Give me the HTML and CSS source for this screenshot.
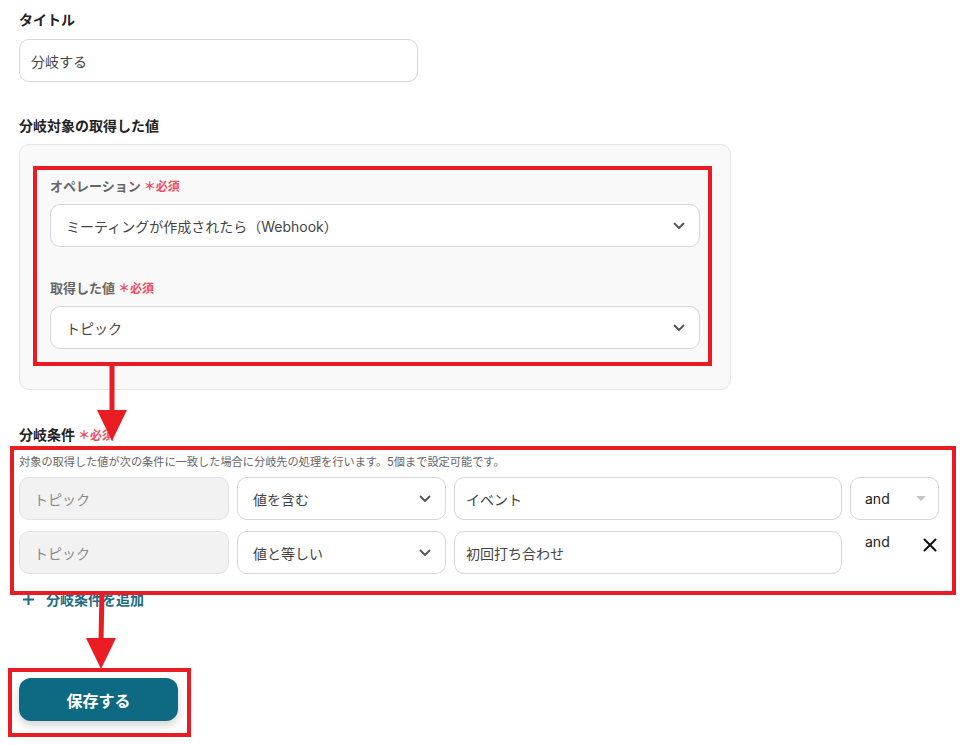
FILE: index.html
```html
<!DOCTYPE html>
<html lang="ja">
<head>
<meta charset="utf-8">
<title>分岐する</title>
<link rel="stylesheet" href="styles.css">
</head>
<body>
<div class="page">
  <div class="label">タイトル</div>
  <div class="input title-input">分岐する</div>

  <div class="label section-label">分岐対象の取得した値</div>
  <div class="panel">
    <div class="sub-label">オペレーション<span class="req">＊必須</span></div>
    <div class="input select">
      <span>ミーティングが作成されたら（Webhook）</span>
      <svg class="chev" width="12" height="8" viewBox="0 0 12 8"><path d="M1.5 1.5 L6 6 L10.5 1.5" fill="none" stroke="#555" stroke-width="1.8" stroke-linecap="round" stroke-linejoin="round"/></svg>
    </div>
    <div class="sub-label second">取得した値<span class="req">＊必須</span></div>
    <div class="input select">
      <span>トピック</span>
      <svg class="chev" width="12" height="8" viewBox="0 0 12 8"><path d="M1.5 1.5 L6 6 L10.5 1.5" fill="none" stroke="#555" stroke-width="1.8" stroke-linecap="round" stroke-linejoin="round"/></svg>
    </div>
  </div>

  <div class="label cond-label">分岐条件<span class="req">＊必須</span></div>
  <div class="desc">対象の取得した値が次の条件に一致した場合に分岐先の処理を行います。5個まで設定可能です。</div>

  <div class="cond-row">
    <div class="input field disabled">トピック</div>
    <div class="input field select">
      <span>値を含む</span>
      <svg class="chev" width="12" height="8" viewBox="0 0 12 8"><path d="M1.5 1.5 L6 6 L10.5 1.5" fill="none" stroke="#555" stroke-width="1.8" stroke-linecap="round" stroke-linejoin="round"/></svg>
    </div>
    <div class="input field">イベント</div>
    <div class="input field andsel">
      <span>and</span>
      <svg width="10" height="6" viewBox="0 0 10 6"><path d="M0 0 L10 0 L5 5 Z" fill="#c4c4c4"/></svg>
    </div>
  </div>
  <div class="cond-row">
    <div class="input field disabled">トピック</div>
    <div class="input field select">
      <span>値と等しい</span>
      <svg class="chev" width="12" height="8" viewBox="0 0 12 8"><path d="M1.5 1.5 L6 6 L10.5 1.5" fill="none" stroke="#555" stroke-width="1.8" stroke-linecap="round" stroke-linejoin="round"/></svg>
    </div>
    <div class="input field">初回打ち合わせ</div>
    <div class="and-static">
      <span class="and-text">and</span>
      <svg class="close" width="14" height="14" viewBox="0 0 14 14"><path d="M1.5 1.5 L12.5 12.5 M12.5 1.5 L1.5 12.5" stroke="#111" stroke-width="2" stroke-linecap="round"/></svg>
    </div>
  </div>

  <div class="add">
    <svg width="13" height="13" viewBox="0 0 13 13"><path d="M6.5 1 V12 M1 6.5 H12" stroke="#1b6b84" stroke-width="2"/></svg>
    <span>分岐条件を追加</span>
  </div>

  <button class="save">保存する</button>
</div>

<svg class="annot" width="970" height="745" viewBox="0 0 970 745">
  <rect x="35" y="168" width="675" height="196" fill="none" stroke="#e91c24" stroke-width="4"/>
  <rect x="12" y="448" width="942" height="145" fill="none" stroke="#e91c24" stroke-width="4"/>
  <rect x="10" y="670" width="179" height="65" fill="none" stroke="#e91c24" stroke-width="4"/>
  <line x1="112" y1="366" x2="112" y2="414" stroke="#e91c24" stroke-width="5"/>
  <polygon points="97,410 127,410 112,441" fill="#e91c24"/>
  <line x1="102" y1="591" x2="101" y2="642" stroke="#e91c24" stroke-width="5"/>
  <polygon points="86,638 116,638 101,669" fill="#e91c24"/>
</svg>
</body>
</html>
```
FILE: styles.css
```css
* { box-sizing: border-box; }
html, body { margin: 0; padding: 0; background: #fff; }
body {
  font-family: Inter, "Noto Sans CJK JP", sans-serif;
  color: #333;
  position: relative;
  width: 970px;
  height: 745px;
  overflow: hidden;
}
.page {
  padding: 11px 19px 0 19px;
  display: flex;
  flex-direction: column;
  align-items: flex-start;
}
.label {
  font-size: 14px;
  font-weight: 700;
  line-height: 18px;
  color: #222;
}
.input {
  border: 1px solid #d3d6dc;
  border-radius: 10px;
  background: #fff;
  height: 43px;
  display: flex;
  align-items: center;
  padding: 0 14px 0 11px;
  font-size: 14px;
  color: #444;
}
.title-input {
  margin-top: 10px;
  width: 399px;
}
.section-label { margin-top: 35px; }
.panel {
  margin-top: 9px;
  width: 712px;
  background: #f9f9f9;
  border: 1px solid #e6e6e6;
  border-radius: 10px;
  padding: 32px 30px 40px 30px;
  display: flex;
  flex-direction: column;
}
.sub-label {
  font-size: 13px;
  font-weight: 700;
  line-height: 18px;
  color: #666;
  margin-bottom: 8px;
}
.sub-label.second { margin-top: 32px; }
.req {
  color: #f04b5f;
  font-weight: 700;
  font-size: 12px;
  margin-left: 3px;
}
.select {
  justify-content: space-between;
  padding-left: 15px;
  padding-right: 14px;
}
.panel .select { width: 100%; }
.cond-label { margin-top: 36px; }
.desc {
  margin-top: 10px;
  font-size: 11.2px;
  line-height: 15px;
  color: #666;
}
.cond-row {
  margin-top: 7px;
  display: grid;
  grid-template-columns: 210px 209px 388px 89px;
  column-gap: 8px;
  width: 922px;
}
.cond-row + .cond-row { margin-top: 11px; }
.field { width: 100%; }
.field.disabled {
  background: #f2f2f2;
  border-color: #e2e2e2;
  color: #8a8a8a;
  padding-left: 14px;
}
.andsel {
  justify-content: space-between;
  padding-left: 14px;
  padding-right: 12px;
  color: #222;
}
.and-static {
  display: flex;
  justify-content: space-between;
  align-items: flex-start;
  padding: 2px 2px 0 15px;
}
.and-text {
  font-size: 14px;
  color: #222;
}
.close { margin-top: 5px; }
.add {
  margin-top: 15px;
  margin-left: 3px;
  display: flex;
  align-items: center;
  gap: 11px;
  font-size: 14px;
  font-weight: 700;
  color: #1b6b84;
}
.save {
  margin-top: 69px;
  width: 159px;
  height: 43px;
  border: none;
  border-radius: 12px;
  background: #0e6a82;
  color: #fff;
  font-family: Inter, "Noto Sans CJK JP", sans-serif;
  font-size: 16px;
  font-weight: 700;
  box-shadow: 0 4px 10px rgba(0, 0, 0, 0.18);
}
.annot {
  position: absolute;
  left: 0;
  top: 0;
  pointer-events: none;
}
```
